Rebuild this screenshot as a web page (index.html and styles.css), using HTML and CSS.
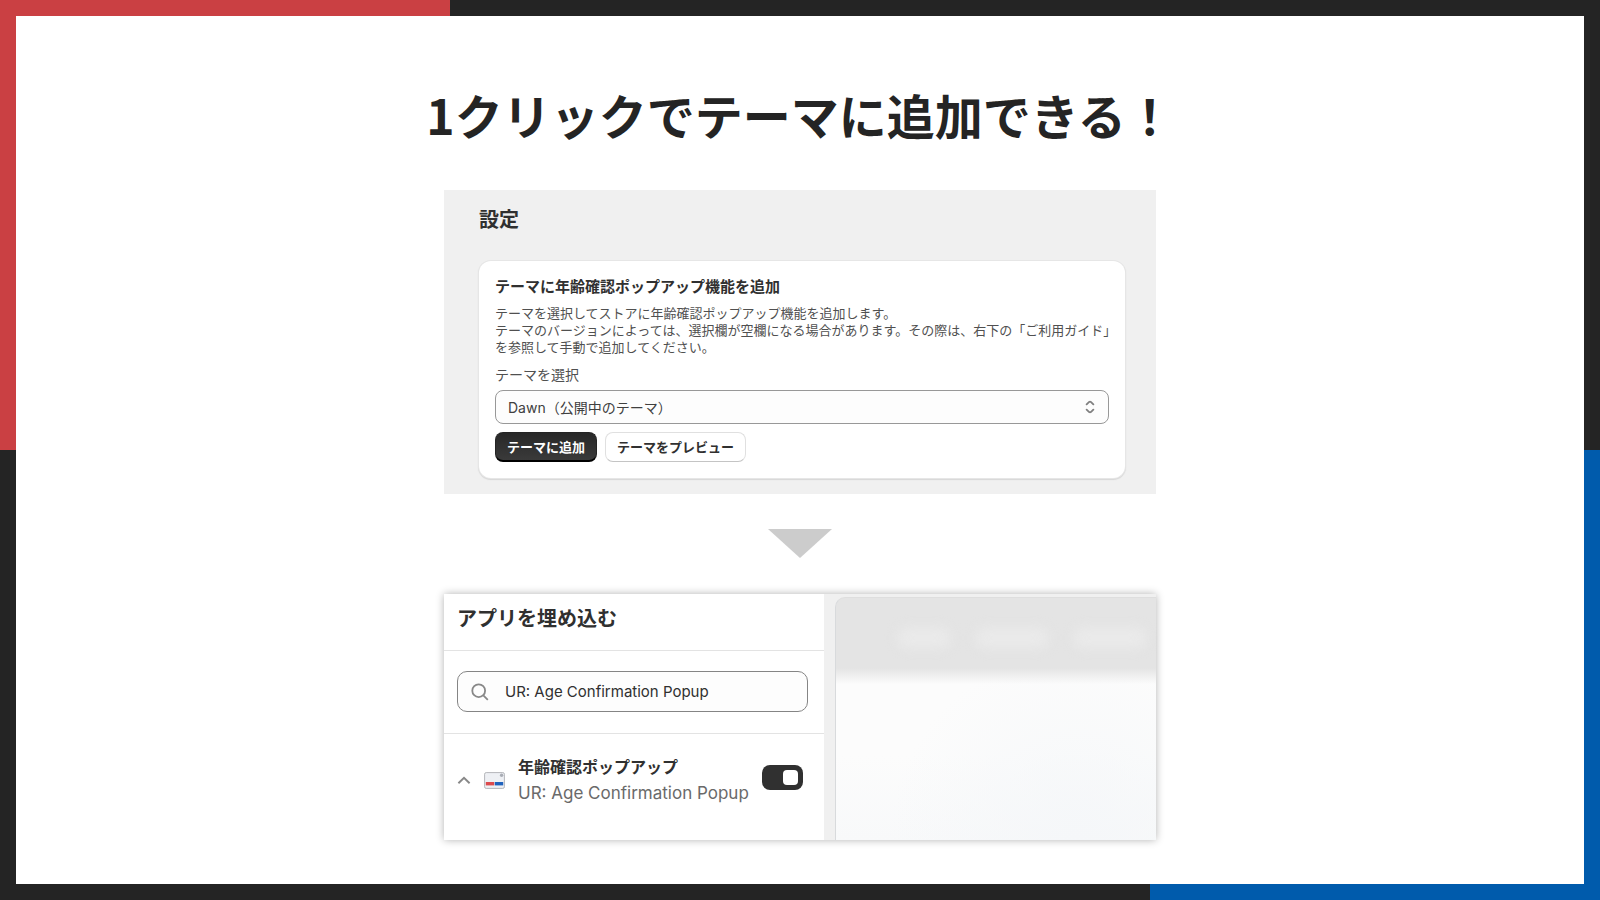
FILE: index.html
```html
<!DOCTYPE html>
<html lang="ja">
<head>
<meta charset="utf-8">
<meta name="viewport" content="width=device-width, initial-scale=1">
<title>1クリックでテーマに追加できる！</title>
<link rel="stylesheet" href="styles.css">
</head>
<body>
<div class="frame">
  <main class="slide">
    <h1 class="headline">1クリックでテーマに追加できる！</h1>

    <section class="settings">
      <h2 class="settings-title">設定</h2>
      <div class="card">
        <h3 class="card-title">テーマに年齢確認ポップアップ機能を追加</h3>
        <p class="card-text">テーマを選択してストアに年齢確認ポップアップ機能を追加します。<br>テーマのバージョンによっては、選択欄が空欄になる場合があります。その際は、右下の「ご利用ガイド」<br>を参照して手動で追加してください。</p>
        <label class="card-label" for="theme">テーマを選択</label>
        <div class="select-wrap">
          <select class="select" id="theme">
            <option>Dawn（公開中のテーマ）</option>
          </select>
          <svg class="select-icon" viewBox="0 0 10 14" aria-hidden="true"><path d="M1.6 4.4 C3 3 4 1.7 5 1.7 S7 3 8.4 4.4 M1.6 9.6 C3 11 4 12.3 5 12.3 S7 11 8.4 9.6"/></svg>
        </div>
        <div class="actions">
          <button class="button button-primary" type="button">テーマに追加</button>
          <button class="button" type="button">テーマをプレビュー</button>
        </div>
      </div>
    </section>

    <svg class="arrow" viewBox="0 0 64 29" aria-hidden="true"><path d="M0 0H64L32 29Z"/></svg>

    <section class="editor">
      <div class="sidebar">
        <h2 class="sidebar-title">アプリを埋め込む</h2>
        <div class="search-row">
          <label class="search">
            <svg class="search-icon" viewBox="0 0 18 18" aria-hidden="true"><circle cx="7.7" cy="7.7" r="6.4"/><path d="M12.3 12.3L16.8 16.8"/></svg>
            <input class="search-input" type="text" value="UR: Age Confirmation Popup" aria-label="アプリを検索">
          </label>
        </div>
        <div class="app">
          <button class="collapse" type="button" aria-label="折りたたむ">
            <svg class="collapse-icon" viewBox="0 0 14 10" aria-hidden="true"><path d="M1.4 8.2L7 2.8L12.6 8.2"/></svg>
          </button>
          <svg class="app-icon" viewBox="0 0 21 17" aria-hidden="true">
            <rect x=".6" y=".6" width="19.8" height="15.8" rx="1.6" fill="#eef0f4" stroke="#b4b6ba"/>
            <circle cx="17.6" cy="3.2" r="1.7" fill="#a9adb5"/>
            <rect x="1.8" y="10" width="8.4" height="3.4" fill="#dc4a4d"/>
            <rect x="10.8" y="10" width="8.4" height="3.4" fill="#1f62bd"/>
          </svg>
          <div class="app-text">
            <label class="app-name" for="embed">年齢確認ポップアップ</label>
            <span class="app-sub">UR: Age Confirmation Popup</span>
          </div>
          <input class="toggle" id="embed" type="checkbox" checked>
        </div>
      </div>
      <div class="canvas">
        <div class="preview">
          <div class="preview-bar">
            <span class="blur blur-short"></span>
            <span class="blur"></span>
            <span class="blur"></span>
          </div>
        </div>
      </div>
    </section>
  </main>
</div>
</body>
</html>
```
FILE: styles.css
```css
*,
*::before,
*::after {
  box-sizing: border-box;
}

body {
  margin: 0;
  color: #303030;
  font-family: Inter, "Noto Sans CJK JP", sans-serif;
}

h1,
h2,
h3,
p {
  margin: 0;
}

input,
select,
button {
  font-family: inherit;
  color: inherit;
}

.frame {
  display: flex;
  min-height: 100vh;
  padding: 16px;
  background:
    linear-gradient(#ca4043, #ca4043) left top / 28.125% 50% no-repeat,
    linear-gradient(#005bac, #005bac) right bottom / 28.125% 50% no-repeat,
    #242424;
}

.slide {
  flex: 1;
  display: flex;
  flex-direction: column;
  align-items: center;
  padding: 62px 16px 40px;
  background: #fff;
}

.headline {
  margin-bottom: 40px;
  color: #242424;
  font: 700 48px/72px "Noto Sans CJK JP", sans-serif;
}

.settings {
  width: 100%;
  max-width: 712px;
  padding: 15px 31px 16px 35px;
  background: #f0f0f0;
}

.settings-title {
  margin-bottom: 26px;
  font-size: 20px;
  line-height: 30px;
}

.card {
  padding: 16px;
  border-radius: 12px;
  background: #fff;
  box-shadow: 0 0 0 1px #e6e6e6, 0 1px 1px 1px #d6d6d6;
}

.card-title {
  margin-bottom: 8px;
  font-size: 15px;
  line-height: 20px;
}

.card-text {
  margin-bottom: 9px;
  color: #505050;
  font-size: 13px;
  line-height: 17px;
  white-space: nowrap;
}

.card-label {
  display: block;
  margin-bottom: 5px;
  color: #505050;
  font-size: 14px;
  line-height: 20px;
}

.select-wrap {
  position: relative;
  margin-bottom: 8px;
}

.select {
  display: block;
  width: 100%;
  height: 34px;
  padding: 0 12px;
  border: 1px solid #989898;
  border-radius: 8px;
  background: #fdfdfd;
  appearance: none;
  color: #404040;
  font-size: 14px;
}

.select-icon {
  position: absolute;
  top: 10px;
  right: 14px;
  width: 10px;
  height: 14px;
  fill: none;
  stroke: #808080;
  stroke-width: 1.8;
  stroke-linecap: round;
  pointer-events: none;
}

.actions {
  display: flex;
  gap: 8px;
}

.button {
  height: 30px;
  padding: 0 11px;
  border: 1px solid #e0e0e0;
  border-bottom-color: #c4c4c4;
  border-radius: 8px;
  background: #fff;
  font-size: 13px;
  font-weight: 600;
  line-height: 20px;
}

.button-primary {
  border: 1px solid #242424;
  border-bottom: 2px solid #000;
  background: linear-gradient(#282828, #3a3a3a);
  color: #fff;
}

.arrow {
  width: 64px;
  height: 29px;
  margin: 35px 0 36px;
  fill: #ccc;
}

.editor {
  display: flex;
  width: 100%;
  max-width: 712px;
  min-height: 246px;
  background: #fff;
  box-shadow: 0 0 8px rgba(0, 0, 0, .3);
}

.sidebar {
  flex: 0 0 380px;
}

.sidebar-title {
  padding: 10px 13px 16px;
  border-bottom: 1px solid #e3e3e3;
  font-size: 20px;
  line-height: 30px;
}

.search-row {
  padding: 20px 16px 21px 13px;
  border-bottom: 1px solid #e3e3e3;
}

.search {
  display: flex;
  align-items: center;
  gap: 16px;
  height: 41px;
  padding: 0 13px;
  border: 1px solid #858585;
  border-radius: 10px;
  background: #fdfdfd;
}

.search-icon {
  flex: none;
  width: 18px;
  height: 18px;
  fill: none;
  stroke: #888;
  stroke-width: 1.8;
}

.search-input {
  flex: 1;
  min-width: 0;
  padding: 0;
  border: 0;
  outline: 0;
  background: none;
  font-size: 15px;
}

.app {
  display: flex;
  align-items: center;
  padding: 20px 21px 20px 13px;
}

.collapse {
  display: flex;
  margin-right: 13px;
  padding: 0;
  border: 0;
  background: none;
}

.collapse-icon {
  width: 14px;
  height: 10px;
  fill: none;
  stroke: #888;
  stroke-width: 2;
}

.app-icon {
  flex: none;
  width: 21px;
  height: 17px;
  margin-right: 13px;
}

.app-text {
  flex: 1;
  display: flex;
  flex-direction: column;
  line-height: 26px;
  white-space: nowrap;
}

.app-name {
  font-size: 16px;
  font-weight: 600;
}

.app-sub {
  color: #6a6a6a;
  font-size: 17px;
}

.toggle {
  display: flex;
  align-items: center;
  justify-content: flex-end;
  width: 41px;
  height: 25px;
  margin: 0 0 6px;
  padding: 5px;
  border-radius: 8px;
  background: #303030;
  appearance: none;
}

.toggle::before {
  content: "";
  width: 15px;
  height: 15px;
  border-radius: 4px;
  background: #fff;
}

.toggle:not(:checked) {
  justify-content: flex-start;
  background: #8a8a8a;
}

.canvas {
  flex: 1;
  display: flex;
  padding: 3px 0 0 11px;
  background: #f0f0f0;
}

.preview {
  flex: 1;
  border-left: 1px solid #d8dadc;
  border-top: 1px solid #dedede;
  border-top-left-radius: 10px;
  background:
    linear-gradient(#e4e4e4 70px, rgba(228, 228, 228, 0) 86px),
    radial-gradient(ellipse at 75% 100%, #f5f7f9, rgba(245, 247, 249, 0) 55%),
    linear-gradient(#fcfcfc 65%, #f8f9fa);
}

.preview-bar {
  display: flex;
  gap: 26px;
  padding: 30px 10px 0 62px;
}

.blur {
  flex: 1;
  height: 20px;
  border-radius: 8px;
  background: #eaeaea;
  filter: blur(6px);
}

.blur-short {
  flex: 0 0 52px;
}
```
